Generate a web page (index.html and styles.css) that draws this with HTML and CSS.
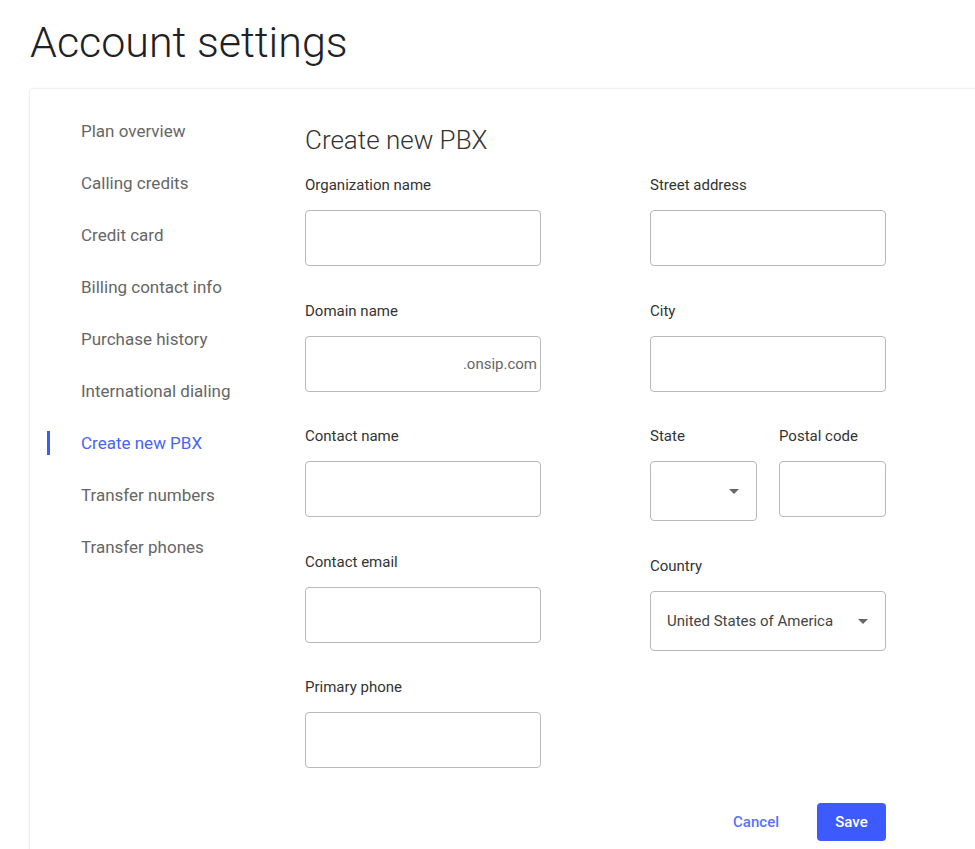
FILE: index.html
```html
<!DOCTYPE html>
<html lang="en">
<head>
<meta charset="utf-8">
<title>Account settings</title>
<link rel="stylesheet" href="styles.css">
</head>
<body>
<h1 class="page-title">Account settings</h1>
<div class="card">
  <nav class="side-nav">
    <a class="nav-item">Plan overview</a>
    <a class="nav-item">Calling credits</a>
    <a class="nav-item">Credit card</a>
    <a class="nav-item">Billing contact info</a>
    <a class="nav-item">Purchase history</a>
    <a class="nav-item">International dialing</a>
    <a class="nav-item active">Create new PBX</a>
    <a class="nav-item">Transfer numbers</a>
    <a class="nav-item">Transfer phones</a>
  </nav>
  <section class="form">
    <h2 class="form-title">Create new PBX</h2>
    <div class="columns">
      <div class="col">
        <div class="field">
          <label class="label">Organization name</label>
          <div class="input"></div>
        </div>
        <div class="field">
          <label class="label">Domain name</label>
          <div class="input suffix-input"><span class="suffix">.onsip.com</span></div>
        </div>
        <div class="field">
          <label class="label">Contact name</label>
          <div class="input"></div>
        </div>
        <div class="field">
          <label class="label">Contact email</label>
          <div class="input"></div>
        </div>
        <div class="field">
          <label class="label">Primary phone</label>
          <div class="input"></div>
        </div>
      </div>
      <div class="col">
        <div class="field">
          <label class="label">Street address</label>
          <div class="input"></div>
        </div>
        <div class="field">
          <label class="label">City</label>
          <div class="input"></div>
        </div>
        <div class="field-row">
          <div class="field small">
            <label class="label">State</label>
            <div class="input select"><span class="select-text"></span><span class="caret"></span></div>
          </div>
          <div class="field small">
            <label class="label">Postal code</label>
            <div class="input"></div>
          </div>
        </div>
        <div class="field">
          <label class="label">Country</label>
          <div class="input select"><span class="select-text">United States of America</span><span class="caret"></span></div>
        </div>
      </div>
    </div>
    <div class="actions">
      <button class="btn btn-text">Cancel</button>
      <button class="btn btn-primary">Save</button>
    </div>
  </section>
</div>
</body>
</html>
```

FILE: styles.css
```css
html, body {
  margin: 0;
  padding: 0;
  background: #ffffff;
  overflow: hidden;
}
body {
  font-family: Roboto, "Liberation Sans", Arial, sans-serif;
  color: #333333;
}
.page-title {
  margin: 0;
  padding: 16px 0 0 30px;
  height: 72px;
  box-sizing: border-box;
  font-family: Roboto, sans-serif;
  font-weight: 300;
  font-size: 43px;
  line-height: 52px;
  color: #202124;
}
.card {
  margin-left: 29px;
  margin-top: 16px;
  width: 980px;
  min-height: 800px;
  display: flex;
  padding-top: 16px;
  box-sizing: border-box;
  border-top: 1px solid #f1f1f1;
  border-left: 1px solid #efefef;
  border-top-left-radius: 4px;
  box-shadow: 0 0 3px rgba(0, 0, 0, 0.05);
}
.side-nav {
  width: 275px;
  flex: none;
  display: flex;
  flex-direction: column;
}
.nav-item {
  position: relative;
  display: block;
  padding-left: 51px;
  height: 52px;
  line-height: 52px;
  font-size: 17px;
  color: #666666;
  cursor: pointer;
}
.nav-item.active {
  color: #4a63f5;
}
.nav-item.active::before {
  content: "";
  position: absolute;
  left: 17px;
  top: 14px;
  width: 3px;
  height: 24px;
  background: #3d5afe;
}
.form {
  width: 581px;
  padding-top: 19px;
}
.form-title {
  margin: 0 0 18px 0;
  font-weight: 300;
  font-size: 26px;
  line-height: 33px;
  color: #333333;
}
.columns {
  display: flex;
  gap: 109px;
}
.col {
  width: 236px;
  display: flex;
  flex-direction: column;
}
.field {
  display: flex;
  flex-direction: column;
  margin-bottom: 34.5px;
}
.col .field:last-child {
  margin-bottom: 0;
}
.field-row {
  display: flex;
  justify-content: space-between;
  margin-bottom: 35px;
}
.field-row .field {
  margin-bottom: 0;
}
.field.small {
  width: 107px;
}
.label {
  font-size: 15px;
  line-height: 20px;
  color: #333333;
  margin-bottom: 15px;
}
.input {
  height: 56px;
  box-sizing: border-box;
  border: 1px solid #b9b9b9;
  border-radius: 4px;
  background: #ffffff;
}
.suffix-input {
  display: flex;
  align-items: center;
  justify-content: flex-end;
  padding-right: 3px;
}
.suffix {
  font-size: 15px;
  color: #666666;
}
.select {
  height: 60px;
  display: flex;
  align-items: center;
  justify-content: space-between;
  padding: 0 17px 0 16px;
}
.select-text {
  font-size: 15px;
  color: #444444;
}
.caret {
  width: 0;
  height: 0;
  border-left: 5px solid transparent;
  border-right: 5px solid transparent;
  border-top: 5px solid #666666;
}
.actions {
  display: flex;
  justify-content: flex-end;
  align-items: center;
  gap: 22px;
  margin-top: 35px;
}
.btn {
  font-family: Roboto, "Liberation Sans", Arial, sans-serif;
  font-size: 15px;
  font-weight: 500;
  border: none;
  border-radius: 4px;
  cursor: pointer;
  height: 38px;
}
.btn-text {
  background: transparent;
  color: #5a72f5;
  padding: 0 16px;
}
.btn-primary {
  background: #3d5afe;
  color: #ffffff;
  width: 69px;
  padding: 0;
}
```
